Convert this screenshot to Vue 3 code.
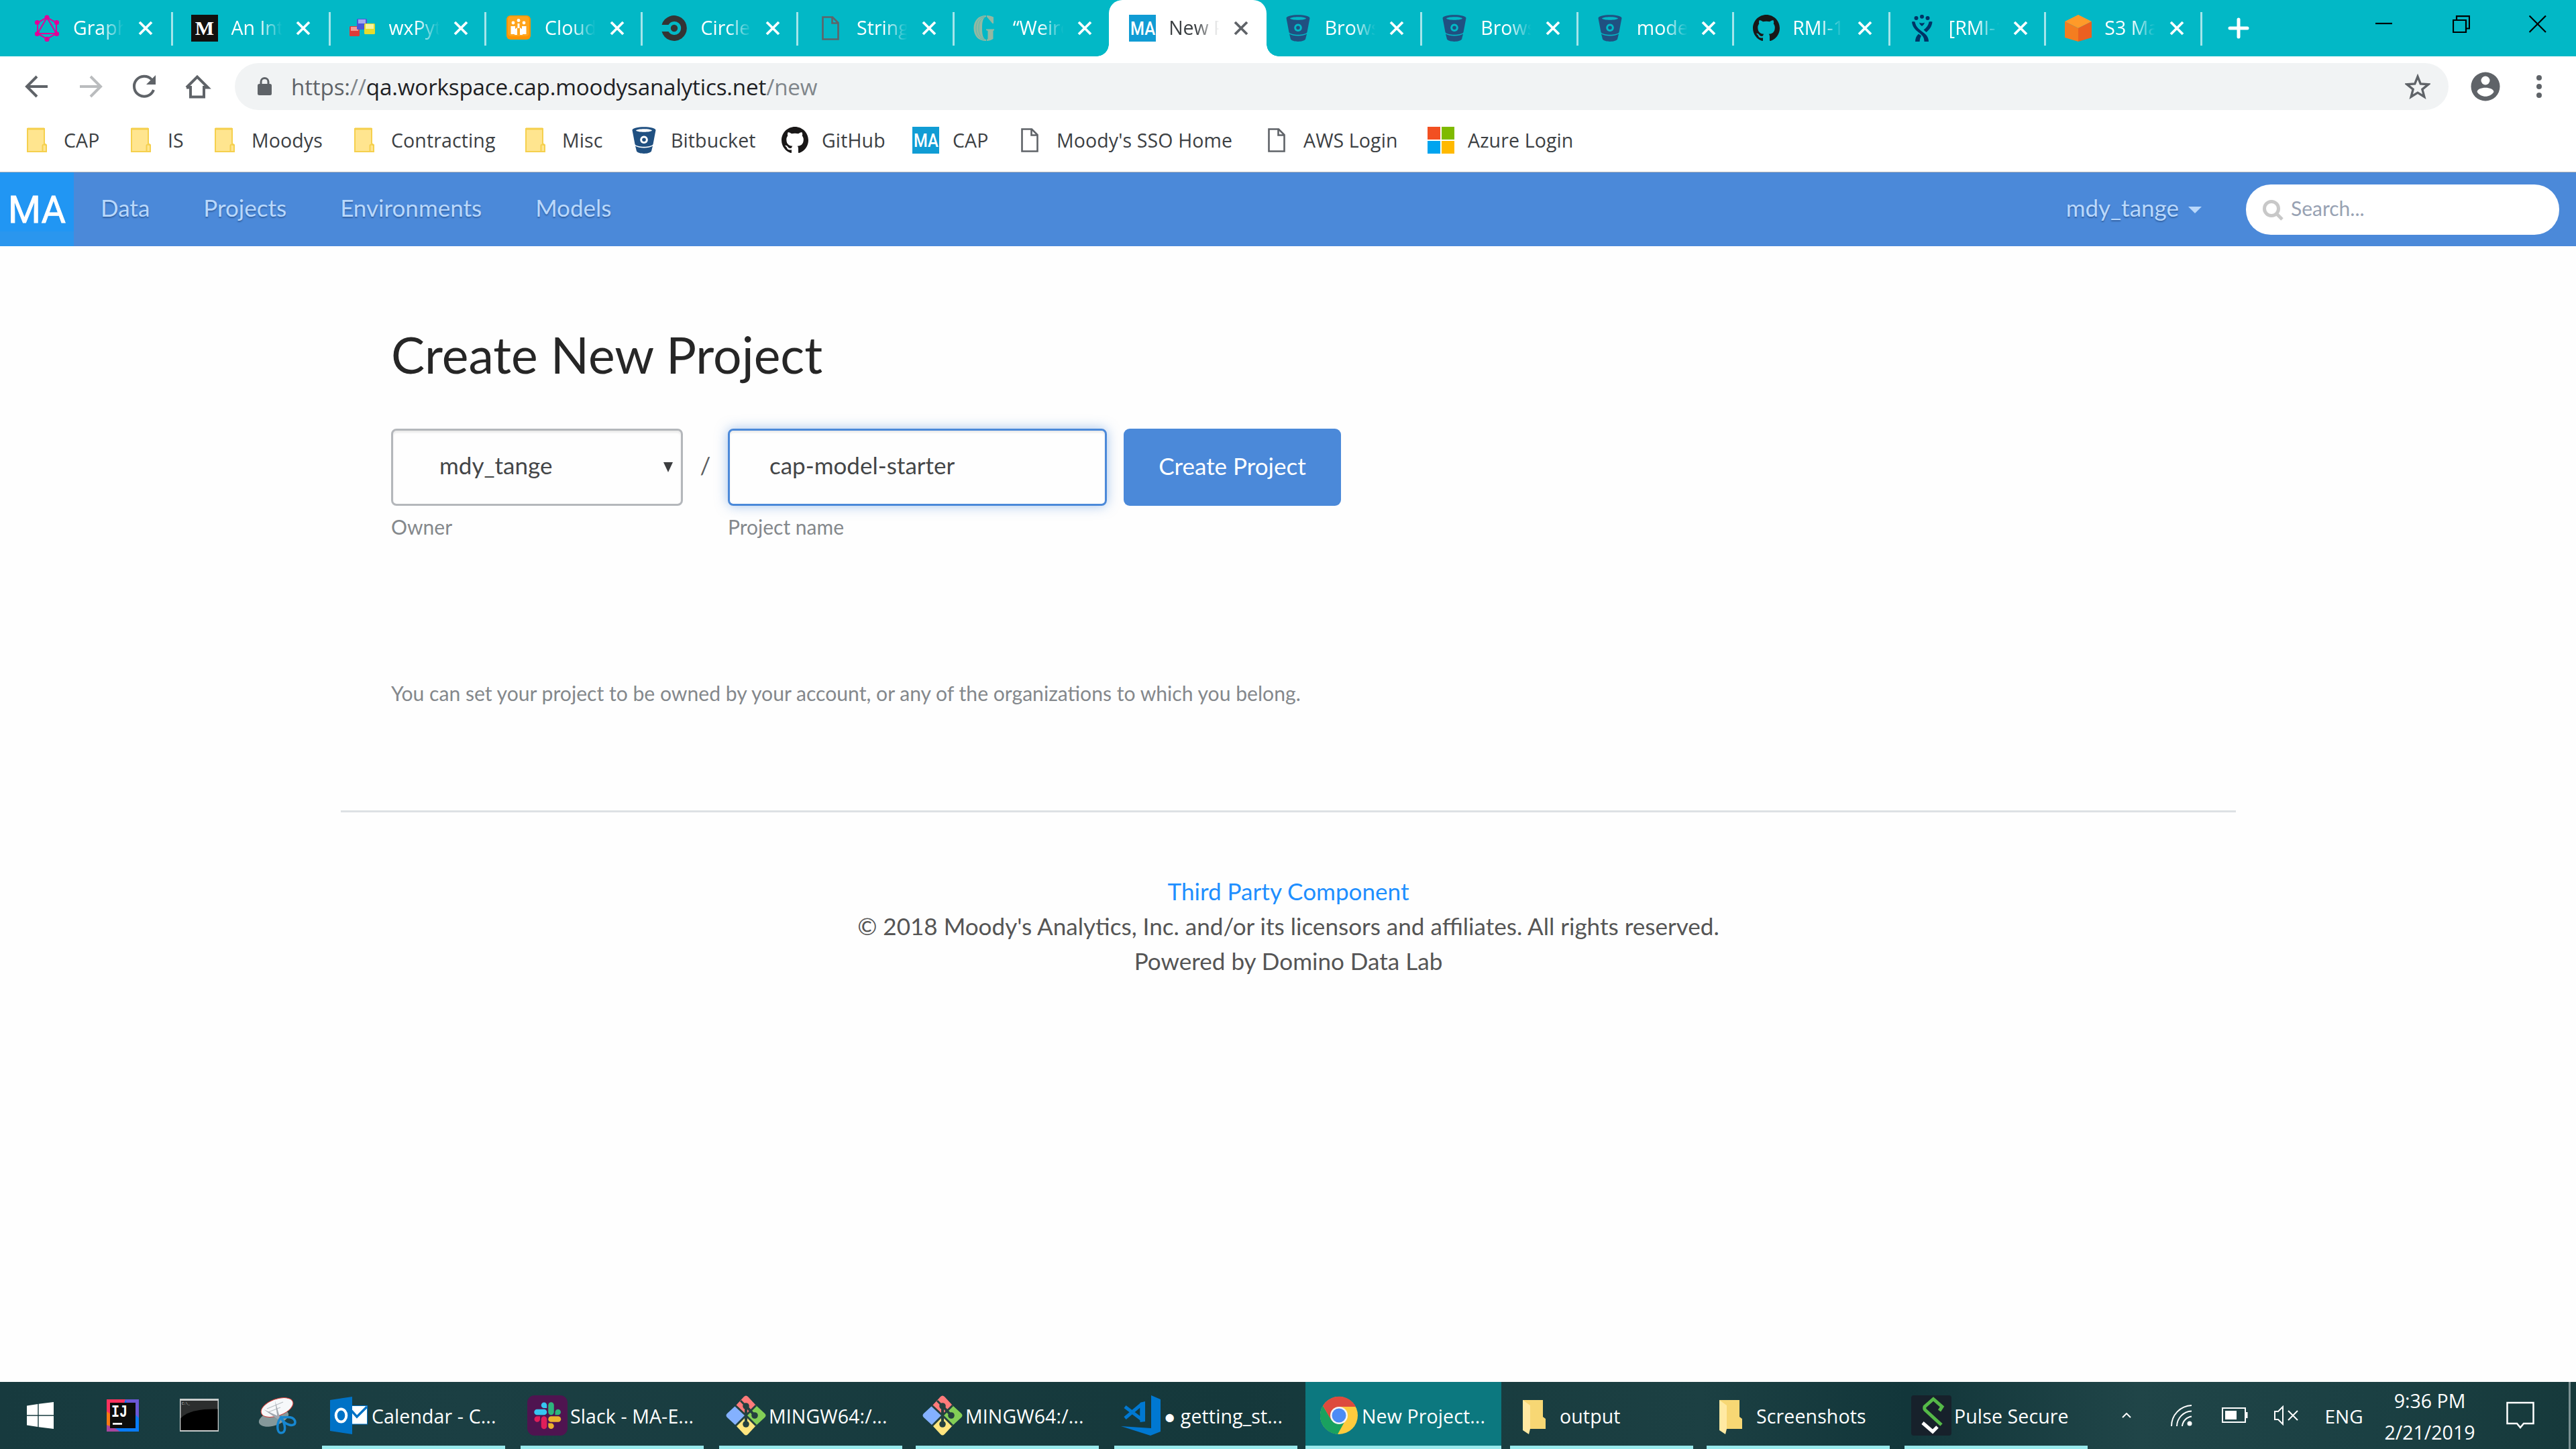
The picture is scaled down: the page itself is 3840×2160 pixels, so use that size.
<script setup>
const tabs = [
  { icon: 'graphql', title: 'Graphiql', sep: true },
  { icon: 'medium', title: 'An Intro', sep: true },
  { icon: 'wx', title: 'wxPython', sep: true },
  { icon: 'cloud', title: 'Cloud C', sep: true },
  { icon: 'circle', title: 'CircleCI', sep: true },
  { icon: 'doc', title: 'String m', sep: true },
  { icon: 'guardian', title: '“Weird', sep: false },
  { icon: 'ma', title: 'New Project', active: true },
  { icon: 'bitbucket', title: 'Browse', sep: true },
  { icon: 'bitbucket', title: 'Browse', sep: true },
  { icon: 'bitbucket', title: 'models', sep: true },
  { icon: 'github', title: 'RMI-1', sep: true },
  { icon: 'jira', title: '[RMI-1', sep: true },
  { icon: 's3', title: 'S3 Man', sep: true }
]

const bookmarks = [
  { icon: 'folder', title: 'CAP', width: 155 },
  { icon: 'folder', title: 'IS', width: 125 },
  { icon: 'folder', title: 'Moodys', width: 208 },
  { icon: 'folder', title: 'Contracting', width: 255 },
  { icon: 'folder', title: 'Misc', width: 162 },
  { icon: 'bitbucket', title: 'Bitbucket', width: 225 },
  { icon: 'github', title: 'GitHub', width: 195 },
  { icon: 'ma', title: 'CAP', width: 155 },
  { icon: 'doc', title: "Moody's SSO Home", width: 368 },
  { icon: 'doc', title: 'AWS Login', width: 245 },
  { icon: 'microsoft', title: 'Azure Login', width: 240 }
]

const navLinks = ['Data', 'Projects', 'Environments', 'Models']

const launchers = [
  { icon: 'windows', width: 120 },
  { icon: 'intellij', width: 126 },
  { icon: 'cmd', width: 102 },
  { icon: 'snip', width: 132 }
]

const tasks = [
  { icon: 'outlook', title: 'Calendar - C...', gap: 23 },
  { icon: 'slack', title: 'Slack - MA-E...', gap: 23 },
  { icon: 'git', title: 'MINGW64:/...', gap: 20 },
  { icon: 'git', title: 'MINGW64:/...', gap: 23 },
  { icon: 'vscode', title: '● getting_st...', gap: 12 },
  { icon: 'chrome', title: 'New Project...', gap: 13, active: true },
  { icon: 'explorer', title: 'output', gap: 20 },
  { icon: 'explorer', title: 'Screenshots', gap: 22 },
  { icon: 'pulse', title: 'Pulse Secure', gap: 17 }
]
</script>

<template>
  <div class="screen">
    <svg class="sprite" aria-hidden="true">
      <symbol id="i-graphql" viewBox="0 0 40 40">
        <g fill="none" stroke="#e10098" stroke-width="2">
          <path d="M20 4 34 12V28L20 36 6 28V12Z" stroke-dasharray="13 3" />
          <path d="M20 4 34 28H6Z" />
        </g>
        <g fill="#e10098">
          <circle cx="20" cy="4" r="3.6" /><circle cx="34.5" cy="11.5" r="3.6" /><circle cx="34.5" cy="28.5" r="3.6" />
          <circle cx="20" cy="36.4" r="3.6" /><circle cx="5.5" cy="28.5" r="3.6" /><circle cx="5.5" cy="11.5" r="3.6" />
        </g>
      </symbol>
      <symbol id="i-medium" viewBox="0 0 40 40">
        <rect width="40" height="40" fill="#12100e" />
        <text x="20" y="30" text-anchor="middle" font-family="Liberation Serif, serif" font-weight="700" font-size="30" fill="#fff">M</text>
      </symbol>
      <symbol id="i-wx" viewBox="0 0 40 40">
        <rect x="1" y="17" width="15" height="15" rx="1.5" fill="#e03a3a" /><rect x="3" y="18" width="11" height="6" fill="#f39a96" />
        <rect x="12" y="6" width="15" height="16" rx="1.5" fill="#4a55d8" /><rect x="14" y="7" width="11" height="6" fill="#a5a9ec" />
        <rect x="23" y="13" width="16" height="16" rx="1.5" fill="#e5dc2c" /><rect x="25" y="14" width="12" height="7" fill="#f6f3a0" />
      </symbol>
      <symbol id="i-cloud" viewBox="0 0 40 40">
        <rect x="2" y="1" width="36" height="36" rx="6" fill="#ff9400" /><rect x="4" y="2" width="32" height="30" rx="5" fill="#ffa41b" />
        <g fill="#fff">
          <circle cx="20" cy="8.5" r="2.4" /><circle cx="12" cy="12" r="2.4" /><circle cx="28" cy="12" r="2.4" />
          <path d="M18.500 13h3v7h-3zM8.500 17h6.500v12h-6.500zM25 17h6.500v12H25zM14 22l4-3v11h-4zM22 19l4 3v8h-4z" />
        </g>
      </symbol>
      <symbol id="i-circle" viewBox="0 0 40 40">
        <path d="M1.500 15A19 19 0 1 1 1.500 25H11.500A10 10 0 1 0 11.500 15Z" fill="#343434" />
        <circle cx="20" cy="20" r="5.200" fill="#343434" />
      </symbol>
      <symbol id="i-doc" viewBox="0 0 40 40">
        <path d="M8.500 3.500H23L31.500 12V36.500H8.500ZM22.500 3.500V12.500H31.500" fill="none" stroke="#5f6368" stroke-width="2.600" />
      </symbol>
      <symbol id="i-guardian" viewBox="0 0 40 40">
        <g fill="#94b8a2">
          <path d="M20 1C8 1 1.500 9 1.500 20S8 39 20 39V37C15.500 36 14 30 14 20S15.500 4 20 3Z" />
          <path d="M21 1C25 1 28 2 31 3.500V13H29.500L21 3Z" />
          <path d="M20 21.500H32V23L30.500 24V36C27.500 38 24 39 21 39V37L22.500 36V24L20 23Z" />
        </g>
        <path d="M17 2.500C8 5 5 12 5 20S8 35 17 37.500M19 3C11 6 9 12 9 20S11 34 19 37" fill="none" stroke="#5cb8ae" stroke-width="1" />
      </symbol>
      <symbol id="i-ma" viewBox="0 0 40 40">
        <rect width="40" height="40" fill="#109cd4" />
        <text x="20.500" y="30" text-anchor="middle" textLength="37" lengthAdjust="spacingAndGlyphs" font-family="Roboto, sans-serif" font-weight="500" font-size="28" fill="#fff">MA</text>
      </symbol>
      <symbol id="i-bitbucket" viewBox="0 0 40 40">
        <path d="M2.500 5C2.500-1.500 37.500-1.500 37.500 5L33.500 26C31 31 9 31 6.500 26ZM8 5.500C10 8.500 30 8.500 32 5.500 30 2.500 10 2.500 8 5.500ZM20 13.500a5.800 5.800 0 1 0 .01 0Z" fill="#205081" fill-rule="evenodd" />
        <circle cx="20" cy="19.300" r="2.800" fill="#205081" />
        <path d="M7 28.500C13 32.500 27 32.500 33 28.500L31 36.500C28 41 12 41 9 36.500Z" fill="#205081" />
      </symbol>
      <symbol id="i-github" viewBox="0 0 16 16">
        <path fill="#191717" d="M8 0C3.580 0 0 3.580 0 8c0 3.540 2.290 6.530 5.470 7.590.4.070.55-.17.55-.38 0-.19-.01-.82-.01-1.490-2.010.37-2.530-.49-2.690-.94-.09-.23-.48-.94-.82-1.130-.28-.15-.68-.52-.01-.53.63-.01 1.080.58 1.230.82.72 1.210 1.870.87 2.330.66.070-.52.28-.87.51-1.070-1.780-.2-3.640-.89-3.640-3.950 0-.87.31-1.590.82-2.150-.08-.2-.36-1.020.08-2.120 0 0 .67-.21 2.200.82.64-.18 1.320-.27 2-.27s1.360.09 2 .27c1.530-1.040 2.200-.82 2.200-.82.44 1.100.16 1.920.08 2.120.51.56.82 1.270.82 2.150 0 3.070-1.870 3.750-3.650 3.950.29.25.54.73.54 1.480 0 1.070-.01 1.930-.01 2.200 0 .21.15.46.55.38A8.010 8.010 0 0 0 16 8c0-4.420-3.580-8-8-8z" />
      </symbol>
      <symbol id="i-jira" viewBox="0 0 40 40">
        <g fill="#003366">
          <circle cx="11.500" cy="5" r="3" /><circle cx="20" cy="2.800" r="3" /><circle cx="28.500" cy="5" r="3" />
          <path d="M16 11.500C18 12.800 22 12.800 24 11.500 23.500 14 22 15.500 20 17 18 15.500 16.500 14 16 11.500Z" />
          <path d="M5 10.500C6.500 9.800 8 9.800 9.500 10.500 11 18 15 21 21.500 26 27 30 30 34 30 40H23.500C23.500 34 21 31 16 27 9 22 5.500 17 5 10.500Z" />
          <path d="M35.500 10.500C34 9.800 32 9.800 30.500 10.500 29.500 16 27 19 22.500 22.500L26.500 26C31.500 22 35 17 35.500 10.500ZM15 28.500 19 31.500C17.500 34 16.800 37 16.600 40H10C10 35 12 31 15 28.500Z" />
        </g>
      </symbol>
      <symbol id="i-s3" viewBox="0 0 40 40">
        <path d="M20 0 40 10 20 20 0 10Z" fill="#ff9a29" /><path d="M0 10 20 20V40L0 34Z" fill="#f47d20" /><path d="M40 10 20 20V40L40 34Z" fill="#eb6020" />
      </symbol>
      <symbol id="i-folder" viewBox="0 0 40 40">
        <path d="M6 3H31V25L34 27V37H6Z" fill="#ffe58f" stroke="#f5d04e" stroke-width="2" />
        <path d="M6 3H31" stroke="#f5cf4c" stroke-width="3" /><path d="M28.500 36V28C28.500 26 33 26 33 28" fill="none" stroke="#f5d04e" stroke-width="2" />
      </symbol>
      <symbol id="i-microsoft" viewBox="0 0 40 40">
        <path d="M0 0H19V19H0Z" fill="#f25022" /><path d="M21 0H40V19H21Z" fill="#7fba00" />
        <path d="M0 21H19V40H0Z" fill="#00a4ef" /><path d="M21 21H40V40H21Z" fill="#ffb900" />
      </symbol>

      <symbol id="i-windows" viewBox="0 0 60 60">
        <path d="M10 15.500 26.300 13V29.300H10ZM27.700 12.800 50 10V29.300H27.700ZM10 30.700H26.300V47L10 44.500ZM27.700 30.700H50V50L27.700 47.200Z" fill="#fff" />
      </symbol>
      <symbol id="i-intellij" viewBox="0 0 60 60">
        <path d="M6 6H54V54H6Z" fill="#087cfa" /><path d="M6 6H34L26 30 6 40Z" fill="#fe315d" /><path d="M34 6H54V34L40 20Z" fill="#6b57d6" />
        <path d="M6 24 12 28V44L6 52Z" fill="#f97a12" /><path d="M6 44 20 50 26 54H6Z" fill="#a8469e" />
        <rect x="11" y="11" width="38" height="38" fill="#0c0c0c" />
        <text x="13" y="32" font-family="Liberation Mono, monospace" font-weight="700" font-size="25" textLength="24" lengthAdjust="spacingAndGlyphs" fill="#fff">IJ</text>
        <rect x="15" y="41" width="14" height="2.800" fill="#fff" />
      </symbol>
      <symbol id="i-cmd" viewBox="0 0 60 60">
        <rect x="1" y="5" width="58" height="49" fill="#c8cccc" /><rect x="2.500" y="8" width="55" height="44" fill="#2c2e2e" />
        <path d="M2.500 34C14 22 36 20 57.500 20.500V52H2.500Z" fill="#000" />
        <text x="4" y="14" font-family="Liberation Mono, monospace" font-size="5" fill="#ddd">C:\_</text>
      </symbol>
      <symbol id="i-snip" viewBox="0 0 60 60">
        <ellipse cx="24" cy="34" rx="23" ry="11" transform="rotate(-18 24 34)" fill="#85989a" />
        <ellipse cx="29" cy="18" rx="25" ry="12.500" transform="rotate(-20 29 18)" fill="#f6f8fa" stroke="#d33b35" stroke-width="1" />
        <path d="M14 20 38 10M16 25 34 18" stroke="#b9bfc4" stroke-width="1.300" />
        <path d="M26 8 34 36 30 36ZM9 21 35 33 32 37Z" fill="#a2a8b0" />
        <g fill="none" stroke="#1787d0" stroke-width="3.500">
          <path d="M35 33C28 40 28 56 35 56 43 56 42 44 35 33Z" /><path d="M35 33C40 45 56 48 56 40 55 31 44 32 35 33Z" />
        </g>
      </symbol>
      <symbol id="i-outlook" viewBox="0 0 60 60">
        <rect x="34" y="15" width="24" height="28.500" fill="#0072c6" /><rect x="35" y="16" width="22" height="26.500" fill="#fff" />
        <path d="M34 23 42 32 57 17" fill="none" stroke="#0072c6" stroke-width="3.500" />
        <path d="M2 7 35 2V58L2 53Z" fill="#0072c6" /><ellipse cx="18.500" cy="30" rx="7.800" ry="9.500" fill="none" stroke="#fff" stroke-width="4" />
      </symbol>
      <symbol id="i-slack" viewBox="0 0 60 60">
        <rect width="60" height="60" rx="11" fill="#4f1450" />
        <g stroke-width="8.500" stroke-linecap="round">
          <path d="M14.500 25H25" stroke="#36c5f0" /><path d="M35.500 14.500V25" stroke="#2eb67d" />
          <path d="M35.500 35.500H46" stroke="#ecb22e" /><path d="M25 35.500V46" stroke="#e01e5a" />
        </g>
        <path d="M25 10.500a4.200 4.200 0 1 0 0 8.500h4.200v-4.200a4.200 4.200 0 0 0-4.200-4.300Z" fill="#36c5f0" />
        <path d="M50 25a4.200 4.200 0 1 0-8.500 0v4.200h4.200a4.200 4.200 0 0 0 4.300-4.200Z" fill="#2eb67d" />
        <path d="M35.500 50a4.200 4.200 0 1 0 0-8.500h-4.200v4.200a4.200 4.200 0 0 0 4.200 4.300Z" fill="#ecb22e" />
        <path d="M10.500 35.500a4.200 4.200 0 1 0 8.500 0v-4.200h-4.200a4.200 4.200 0 0 0-4.300 4.200Z" fill="#e01e5a" />
      </symbol>
      <symbol id="i-git" viewBox="0 0 60 60">
        <path d="M27 2Q30-1 33 2L45 15 30 29 15 15Z" fill="#ff7b7b" /><path d="M15 15 30 30 15 45 2 33Q-1 30 2 27Z" fill="#84b1ff" />
        <path d="M45 15 58 27Q61 30 58 33L45 45 30 30Z" fill="#83cf56" /><path d="M15 45 30 31 45 45 33 58Q30 61 27 58Z" fill="#ffe57f" />
        <g stroke="#24403f" stroke-width="3" fill="none">
          <path d="M14 15 30 30 45 45M45 15 14 46M22 8 31 17" /><path d="M30 16V44M31 17 43 30" stroke-width="4" />
        </g>
        <g fill="#24403f"><circle cx="30" cy="16" r="4.800" /><circle cx="43" cy="30" r="4.800" /><circle cx="30" cy="43" r="4.800" /></g>
      </symbol>
      <symbol id="i-vscode" viewBox="0 0 60 60">
        <path d="M45 0 59 6V54L44 60 0 46 45 49Z" fill="#0078d1" />
        <path d="M6 17 31 36V13L6 34" fill="none" stroke="#0078d1" stroke-width="5" stroke-linejoin="round" />
        <path d="M28.500 11 36 9V39L28.500 40Z" fill="#0078d1" />
      </symbol>
      <symbol id="i-chrome" viewBox="0 0 60 60">
        <circle cx="30" cy="30" r="28" fill="#fdcb3d" />
        <path d="M6 15.500 19 37 30 43 38 40 28 58A28 28 0 0 1 6 15.500Z" fill="#19a15f" />
        <path d="M6 15.500A28 28 0 0 1 55 17H30L18 36Z" fill="#dd4b3e" />
        <circle cx="30" cy="30" r="13" fill="#f3f5f6" /><circle cx="30" cy="30" r="10.500" fill="#4c8bf5" />
      </symbol>
      <symbol id="i-explorer" viewBox="0 0 60 60">
        <path d="M9 7H39V32L43 35V50H14L9 7Z" fill="#f7d774" /><path d="M9 7 20 15V50L18 58 9 52Z" fill="#ffe9a2" />
      </symbol>
      <symbol id="i-pulse" viewBox="0 0 60 60">
        <rect width="60" height="60" rx="4" fill="#17212b" />
        <path d="M42 23 46 17 33 5.500 20 17Q19 20 21 22L45 44" fill="none" stroke="#55b948" stroke-width="5" />
        <path d="M17 41 32 54 39 47" fill="none" stroke="#fff" stroke-width="5" />
      </symbol>
    </svg>

    <header class="tabstrip">
      <div v-for="(tab, i) in tabs" :key="i" class="tab" :class="{ active: tab.active }">
        <svg class="favicon"><use :href="'#i-' + tab.icon" /></svg>
        <span class="tab-title">{{ tab.title }}</span>
        <svg class="tab-close" viewBox="0 0 22 22"><path d="M2 2 20 20M20 2 2 20" /></svg>
        <i v-if="tab.sep" class="tab-sep"></i>
      </div>
      <svg class="new-tab" viewBox="0 0 32 32"><path d="M16 3V29M3 16H29" /></svg>
      <div class="window-controls">
        <svg viewBox="0 0 26 26"><path d="M0 12H25" /></svg>
        <svg viewBox="0 0 26 26"><path d="M1 7H20V25H1ZM6 7V1.200H25V19.500H20" /></svg>
        <svg viewBox="0 0 26 26"><path d="M.5.5 25 25M25 .5.5 25" /></svg>
      </div>
    </header>

    <div class="toolbar">
      <svg class="tool" viewBox="0 0 40 40"><path d="M36 20H6M20 5 5 20 20 35" /></svg>
      <svg class="tool faded" viewBox="0 0 40 40"><path d="M4 20H34M20 5 35 20 20 35" /></svg>
      <svg class="tool" viewBox="0 0 40 40"><path d="M34 25A15 15 0 1 1 31 9.500" /><path class="solid" d="M37 3V17H23Z" /></svg>
      <svg class="tool" viewBox="0 0 40 40"><path d="M9 19V35.500H29V19M3 21.500 19 5.500 35 21.500H29M9 21.500H3" /></svg>
      <div class="omnibox">
        <svg class="lock" viewBox="0 0 22 28"><rect y="10" width="21" height="17" rx="2.500" /><path d="M5 11V7A5.500 5.500 0 0 1 16 7V11" /></svg>
        <span class="url"><span>https:</span><span>//</span><b>qa.workspace.cap.moodysanalytics.net</b><span>/new</span></span>
        <svg class="star" viewBox="0 0 36 36"><path d="M18 4 22 14.200 33 15 24.500 22 27.300 32.500 18 26.700 8.700 32.500 11.500 22 3 15 14 14.200Z" /></svg>
      </div>
      <svg class="avatar" viewBox="0 0 44 44"><circle cx="22" cy="22" r="21.500" fill="#5f6368" /><circle cx="22" cy="13" r="6.500" fill="#fff" /><path d="M9.500 30C10 21.500 34 21.500 34.500 30 29 39 15 39 9.500 30Z" fill="#fff" /></svg>
      <svg class="kebab" viewBox="0 0 8 34"><circle cx="4" cy="4" r="4" /><circle cx="4" cy="17" r="4" /><circle cx="4" cy="30" r="4" /></svg>
    </div>

    <div class="bookmarks">
      <div v-for="(b, i) in bookmarks" :key="i" class="bookmark" :style="{ width: b.width + 'px' }">
        <svg class="favicon"><use :href="'#i-' + b.icon" /></svg>
        <span>{{ b.title }}</span>
      </div>
    </div>

    <nav class="navbar">
      <div class="brand">MA</div>
      <a v-for="link in navLinks" :key="link" class="nav-link">{{ link }}</a>
      <a class="nav-link user"><span>mdy_tange</span><i class="caret"></i></a>
      <div class="search">
        <svg viewBox="0 0 32 32"><circle cx="13" cy="13" r="10.500" /><path d="M21 21 29 29" /></svg>
        <span>Search...</span>
      </div>
    </nav>

    <main class="page">
      <h1>Create New Project</h1>
      <div class="form">
        <div class="field owner">
          <div class="control"><span>mdy_tange</span><i class="arrow"></i></div>
          <label>Owner</label>
        </div>
        <span class="slash">/</span>
        <div class="field name">
          <div class="control focused"><span>cap-model-starter</span></div>
          <label>Project name</label>
        </div>
        <button class="submit">Create Project</button>
      </div>
      <p class="hint">You can set your project to be owned by your account, or any of the organizations to which you belong.</p>
      <hr />
      <footer>
        <a>Third Party Component</a>
        <span>© 2018 Moody's Analytics, Inc. and/or its licensors and affiliates. All rights reserved.</span>
        <span>Powered by Domino Data Lab</span>
      </footer>
    </main>

    <div class="taskbar">
      <div v-for="l in launchers" :key="l.icon" class="launcher" :style="{ width: l.width + 'px' }">
        <svg class="app-icon"><use :href="'#i-' + l.icon" /></svg>
      </div>
      <div v-for="(t, i) in tasks" :key="i" class="task" :class="{ active: t.active }" :style="{ marginRight: t.gap + 'px' }">
        <svg class="app-icon"><use :href="'#i-' + t.icon" /></svg>
        <span>{{ t.title }}</span>
      </div>
      <div class="tray">
        <div class="cell w82"><svg width="14" height="8" viewBox="0 0 14 8"><path d="M1 7 7 1 13 7" /></svg></div>
        <div class="cell w82">
          <svg width="32" height="32" viewBox="0 0 32 32"><path d="M1 32A31 31 0 0 1 31 1M9 32A23 23 0 0 1 31 9.500M17 32A16 16 0 0 1 31 17.500" /><circle cx="28" cy="28" r="3.500" fill="#fff" stroke="none" /></svg>
        </div>
        <div class="cell w76">
          <svg width="40" height="26" viewBox="0 0 40 26"><path d="M2 2H36V23H2Z" /><path d="M38 8V17" stroke-width="3" /><rect x="6" y="6" width="17" height="13" fill="#fff" stroke="none" /></svg>
        </div>
        <div class="cell w78">
          <svg width="38" height="30" viewBox="0 0 38 30"><path d="M2 9V21H7L14 28V2L7 9ZM22 8 36 22M36 8 22 22" /></svg>
        </div>
        <div class="cell lang">ENG</div>
        <div class="cell clock"><span>9:36 PM</span><span>2/21/2019</span></div>
        <div class="cell notify">
          <svg width="42" height="42" viewBox="0 0 42 42"><path d="M1.500 2H40.500V33H26L21 39 16 33H1.500Z" stroke-width="2.500" /></svg>
        </div>
        <i class="peek"></i>
      </div>
    </div>
  </div>
</template>

<style>
body {
  background: #fefefe;
  overflow: hidden;
}
</style>

<style scoped>
.screen {
  display: flex;
  flex-direction: column;
  width: 3840px;
  height: 2160px;
  overflow: hidden;
  background: #fefefe;
  font-family: "Open Sans", "Noto Sans", sans-serif;
  font-size: 28.5px;
  color: #3c4043;
}
.screen * { box-sizing: border-box; }
.sprite { position: absolute; width: 0; height: 0; }
.favicon { width: 40px; height: 40px; flex: none; }

/* Tab strip */
.tabstrip {
  display: flex;
  flex: none;
  height: 84px;
  padding-left: 22px;
  background: #02b8c6;
}
.tab {
  display: flex;
  flex: none;
  align-items: center;
  width: 232.54px;
  padding-left: 27.5px;
  color: #fff;
  position: relative;
}
.tab:first-child { width: 235.5px; }
.tab:nth-child(2) { width: 235px; }
.tab-title {
  width: 78px;
  margin: 0 18.5px 3px 19.5px;
  overflow: hidden;
  white-space: nowrap;
  mask-image: linear-gradient(to right, #000 52%, transparent 97%);
}
.tab-close { width: 22px; height: 22px; flex: none; fill: none; stroke: #fff; stroke-width: 3.8; }
.tab-sep { width: 3px; height: 50px; margin: 2px 0 0 auto; background: #a5e5ea; }
.tab.active {
  width: 234.54px;
  margin-left: -2px;
  padding-left: 29.5px;
  background: #fff;
  color: #3c4043;
  border-radius: 20px 20px 0 0;
}
.tab.active .tab-close { stroke: #5f6368; }
.tab.active::before,
.tab.active::after {
  content: "";
  position: absolute;
  bottom: 0;
  left: -18px;
  width: 18px;
  height: 18px;
  background: radial-gradient(circle at 0 0, transparent 17.5px, #fff 18px);
}
.tab.active::after {
  left: auto;
  right: -18px;
  background: radial-gradient(circle at 100% 0, transparent 17.5px, #fff 18px);
}
.new-tab { width: 32px; height: 32px; margin: 26px 0 0 38px; stroke: #fff; stroke-width: 5; stroke-linecap: round; }
.window-controls { display: flex; gap: 88.5px; margin: 23px 44px 0 auto; }
.window-controls svg { width: 26px; height: 26px; fill: none; stroke: #000; stroke-width: 2.2; }

/* Address bar */
.toolbar {
  display: flex;
  flex: none;
  align-items: center;
  height: 90px;
  padding-left: 35px;
  background: #fff;
}
.tool { width: 40px; height: 40px; margin-right: 40px; fill: none; stroke: #5f6368; stroke-width: 4; }
.tool .solid { fill: #5f6368; stroke: none; }
.tool.faded { stroke: #babcbe; }
.omnibox {
  display: flex;
  align-items: center;
  width: 3300px;
  height: 70px;
  margin-left: -5px;
  padding: 0 27px 0 34px;
  border-radius: 35px;
  background: #f1f3f4;
}
.lock { width: 22px; height: 28px; fill: #5f6368; }
.lock path { fill: none; stroke: #5f6368; stroke-width: 3; }
.url { margin-left: 28px; font-size: 33.2px; letter-spacing: -0.17px; color: #80868b; white-space: nowrap; }
.url span:first-child { color: #5f6368; }
.url b { font-weight: 400; color: #202124; }
.star { width: 38px; height: 38px; margin-left: auto; fill: none; stroke: #5f6368; stroke-width: 3.2; }
.avatar { width: 44px; height: 44px; margin-left: 33px; }
.kebab { width: 8px; height: 34px; margin-left: 54px; fill: #5f6368; }

/* Bookmarks */
.bookmarks {
  display: flex;
  flex: none;
  align-items: center;
  height: 83px;
  padding: 0 0 13px 35px;
  background: #fff;
  border-bottom: 1px solid #b0b2b5;
}
.bookmark { display: flex; flex: none; align-items: center; gap: 20px; white-space: nowrap; letter-spacing: 0.12px; }

/* Application navbar */
.navbar {
  display: flex;
  flex: none;
  align-items: center;
  height: 110px;
  padding-right: 25px;
  background: #4b89d9;
  font-family: Lato, "Open Sans", sans-serif;
}
.brand {
  width: 110px;
  height: 110px;
  padding-left: 12px;
  background: linear-gradient(#2196f3 88px, #2a96ee 88px);
  font: 400 56px/112px Roboto, sans-serif;
  -webkit-text-stroke: 0.8px #fff;
  color: #fff;
}
.nav-link {
  margin: 0 40px 7px;
  font-size: 35px;
  line-height: 52px;
  color: #b9d8fb;
  text-shadow: 0 2px 2px rgba(20, 50, 100, 0.45);
  white-space: nowrap;
}
.user { display: flex; align-items: center; margin-left: auto; margin-right: 66px; }
.caret { margin: 8px 0 0 14px; border: 10px solid transparent; border-top-color: #b9d8fb; border-bottom: 0; }
.search {
  display: flex;
  align-items: center;
  width: 467px;
  height: 75px;
  padding-left: 25px;
  border-radius: 37px;
  background: #fff;
  font-size: 30px;
  color: #98a2b3;
}
.search svg { width: 32px; height: 32px; margin: 4px 10px 0 0; fill: none; stroke: #c8c8c8; stroke-width: 5; }
.search span { margin-bottom: 4px; }

/* Page */
.page {
  flex: 1;
  padding: 116px 507px 0 508px;
  font-family: Lato, "Open Sans", sans-serif;
  color: #444648;
}
h1 {
  margin: 0 0 66px 75px;
  font-size: 75.1px;
  line-height: 90px;
  font-weight: 400;
  color: #262626;
}
.form { display: flex; align-items: flex-start; margin-left: 75px; font-size: 35px; }
.field { display: flex; flex-direction: column; gap: 13px; }
.owner { width: 435px; }
.name { width: 565px; }
.field label { font-size: 30px; line-height: 36px; color: #84888c; }
.control {
  display: flex;
  align-items: center;
  justify-content: space-between;
  height: 115px;
  padding: 0 12px 7px 69px;
  border: 3px solid #b4b7bb;
  border-radius: 8px;
  box-shadow: inset 0 3px 3px rgba(0, 0, 0, 0.08);
}
.control.focused {
  padding-left: 59px;
  border-color: #4b89d9;
  box-shadow: inset 0 3px 3px rgba(0, 0, 0, 0.08), 0 0 18px rgba(75, 137, 217, 0.5);
}
.arrow { margin-top: 6px; border: 7.5px solid transparent; border-top: 15px solid #3c3e40; border-bottom: 0; }
.slash { width: 67px; text-align: center; line-height: 108px; color: #5c5e60; }
.submit {
  width: 324px;
  height: 115px;
  margin-left: 25px;
  padding: 0 0 6px;
  border: 0;
  border-radius: 9px;
  background: #4b89d9;
  font: 35px Lato, sans-serif;
  color: #fff;
}
.hint { margin: 212px 0 157px 75px; font-size: 30.13px; line-height: 36px; color: #84888c; }
hr { height: 3px; margin: 0 0 91px; border: 0; background: #dde1e4; }
footer { display: flex; flex-direction: column; align-items: center; font-size: 35.1px; line-height: 52px; color: #555; }
footer a { color: #1e8fff; }

/* Taskbar */
.taskbar {
  display: flex;
  flex: none;
  height: 100px;
  background: linear-gradient(90deg, #173a3e, #1b3f43 18%, #15383b 48%, #1c4043 66%, #12363a 74%, #204548 83%, #1b4043 92%, #16393b);
  color: #fff;
  white-space: nowrap;
}
.launcher { display: flex; align-items: center; justify-content: center; }
.app-icon { width: 60px; height: 60px; flex: none; }
.task {
  display: flex;
  flex: none;
  align-items: center;
  gap: 4px;
  width: 273px;
  padding: 5px 0 0 10px;
  border-bottom: 5px solid #98e9ec;
  letter-spacing: 0.12px;
}
.task span { margin-top: 2px; }
.task.active { width: 292px; padding-left: 20px; background: #0c787f; }
.tray { display: flex; align-items: center; }
.cell { display: flex; align-items: center; justify-content: center; }
.cell svg { fill: none; stroke: #fff; stroke-width: 2; }
.w82 { width: 82px; }
.w76 { width: 76px; }
.w78 { width: 78px; }
.lang { width: 94px; padding-top: 2px; font-size: 28px; }
.clock { flex-direction: column; width: 162px; line-height: 47.5px; padding-top: 4px; }
.notify { width: 108px; }
.peek { width: 3px; height: 100px; margin-left: 18px; background: #7b9092; }
</style>
